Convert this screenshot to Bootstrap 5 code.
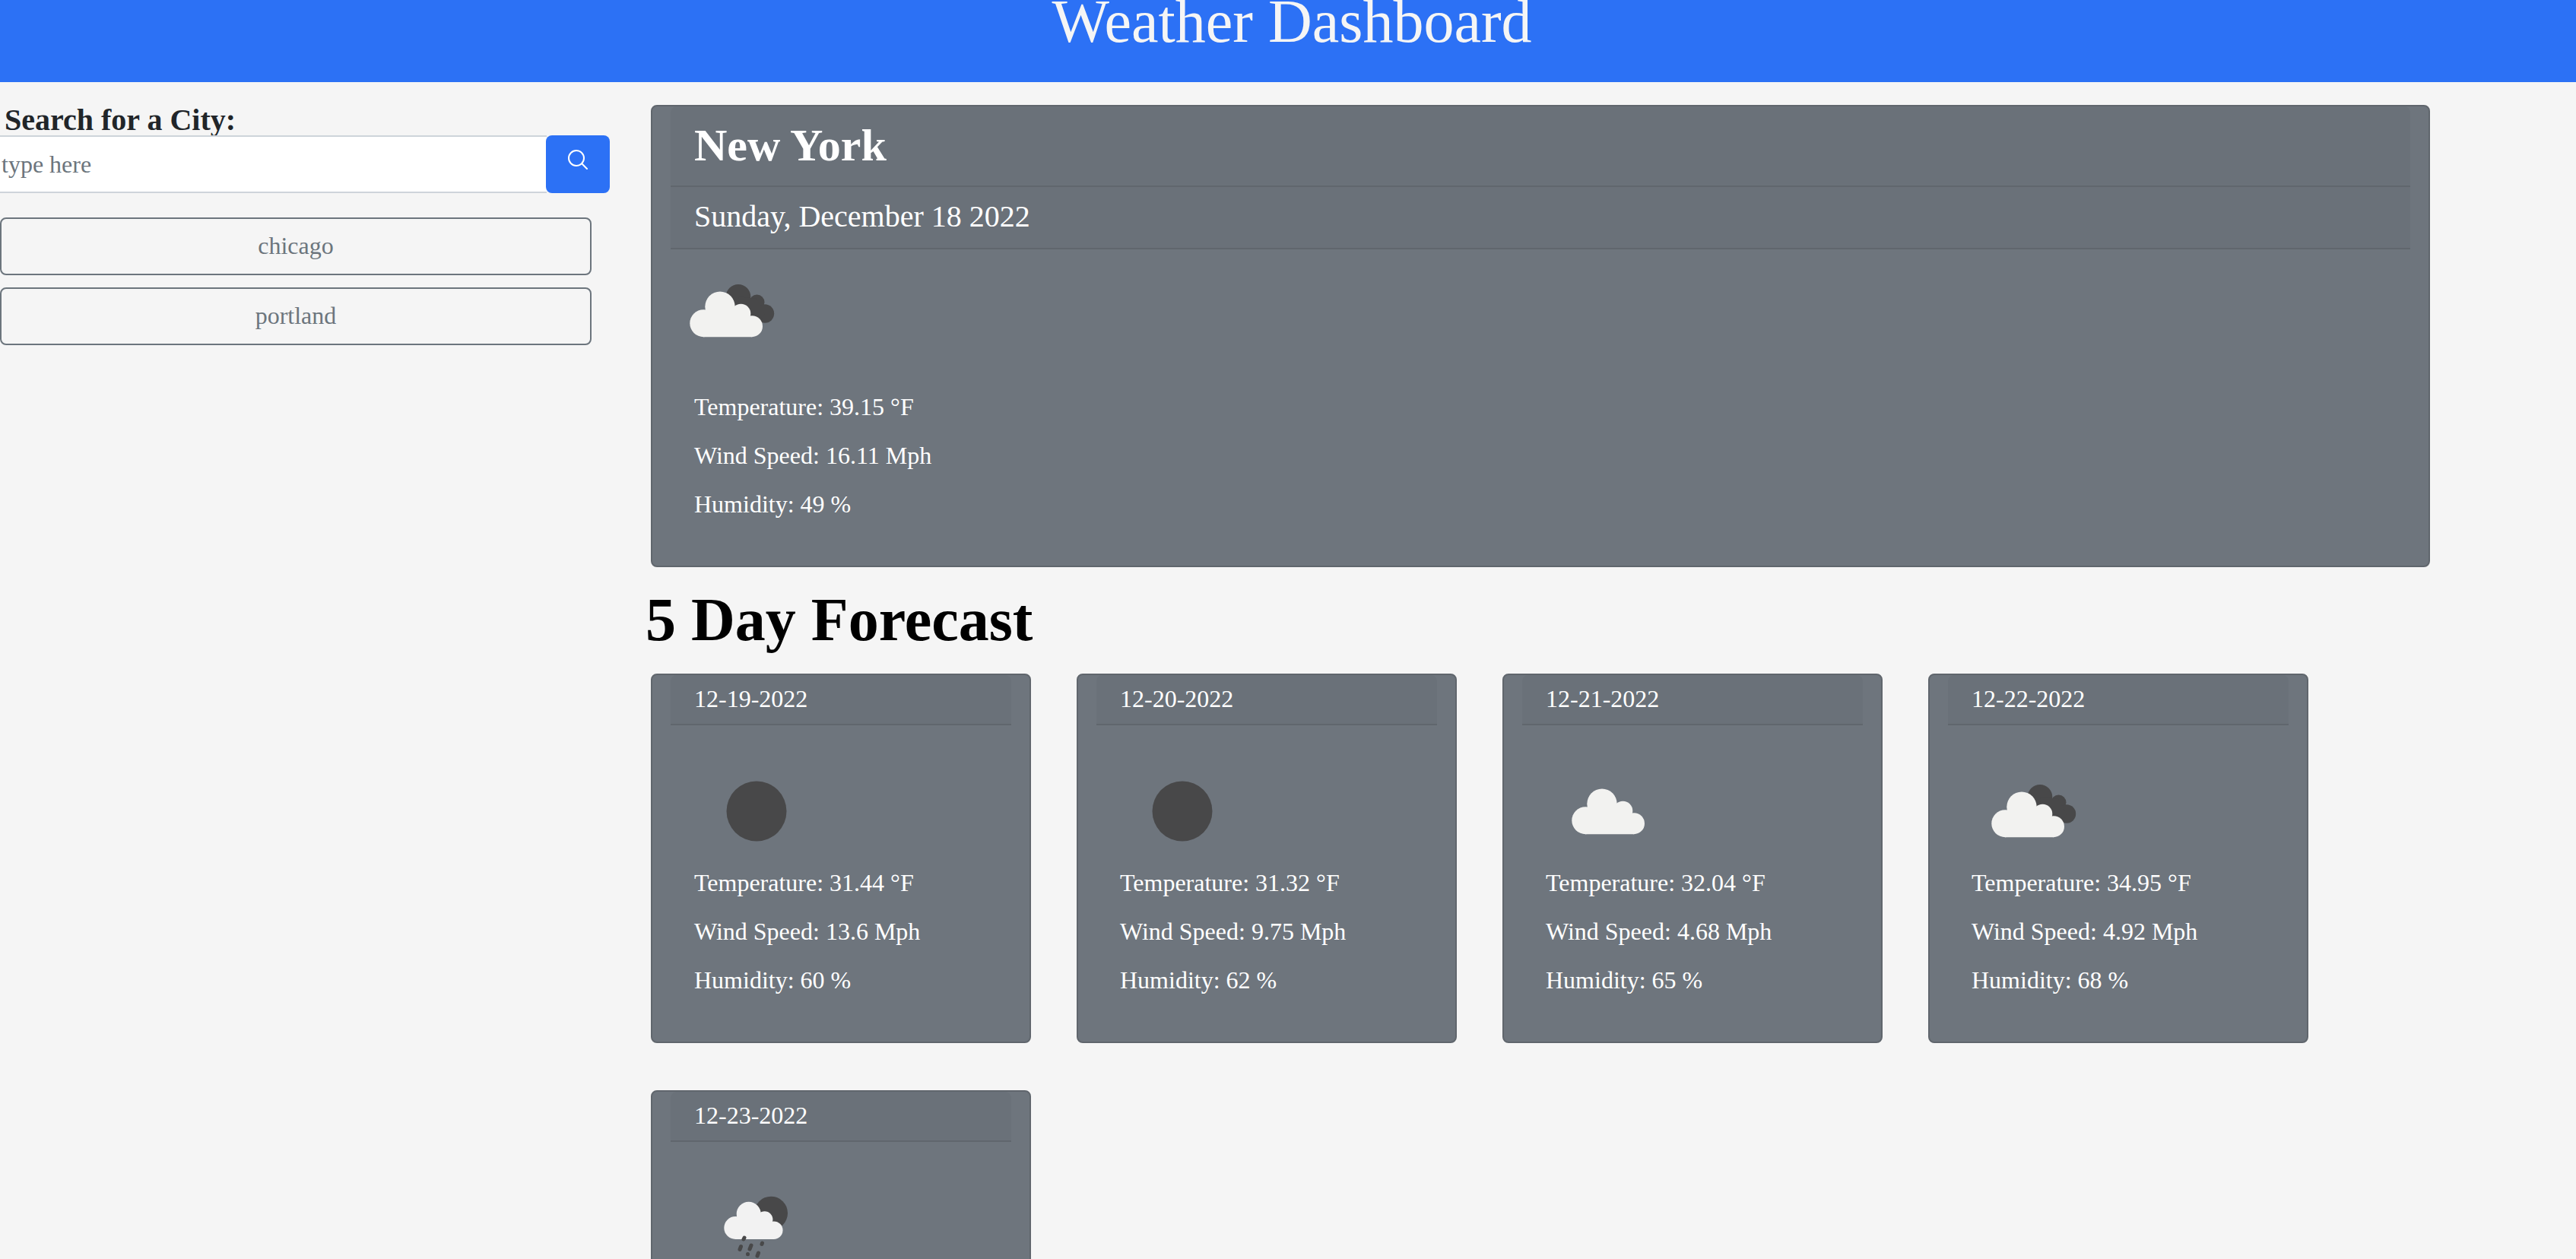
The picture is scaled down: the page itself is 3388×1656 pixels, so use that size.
<!DOCTYPE html>
<html lang="en">
<head>
<meta charset="utf-8">
<meta name="viewport" content="width=device-width, initial-scale=1">
<title>Weather Dashboard</title>
<link rel="stylesheet" href="https://cdn.jsdelivr.net/npm/bootstrap@5.3.0/dist/css/bootstrap.min.css">
<style>
  body { background: #f5f5f5; font-family: "Liberation Serif", "Times New Roman", serif; font-size: 32px; line-height: 48px; }
  .site-header { background: #2c71f5; color: #f5f5f5; padding: 0 0 52px 10px; }
  .site-header h1 { font-size: 80px; line-height: 56px; font-weight: 400; }
  .sidebar { padding-top: 30px; }
  .search-label { font-size: 40px; line-height: 40px; font-weight: 700; padding-left: 6px; }
  .search-group { padding-right: 45px; }
  .search-group .form-control { height: 76px; border: solid #ced4da; border-width: 2px 0; border-radius: 0; padding: 0 0 0 2px; font-size: 32px; color: #212529; }
  .search-group .form-control::placeholder { color: #6c757d; }
  .search-btn { width: 84px; height: 76px; padding: 0 0 12px; border: 0; background: #2c71f5; color: #fff; border-radius: 8px !important; }
  .history { padding: 32px 69px 0 0; gap: 16px; }
  .history .btn { height: 76px; font-size: 32px; line-height: 48px; padding: 0 0 2px; color: #6c757d; border: 2px solid #6c757d; border-radius: 8px; }
  .results { padding: 30px 192px 0 9px; }
  .weather-card { background: #6e757d; color: #fff; border: 2px solid #60666d; border-radius: 8px; padding: 0 24px 41px; }
  .weather-card .card-header { background: rgba(0,0,0,.03); border-bottom: 2px solid #60666d; padding: 7px 31px 9px; border-radius: 8px 8px 0 0; }
  .weather-card .card-header + .card-header { border-radius: 0; }
  .weather-card p { margin: 0 31px 16px; }
  .city-name { font-size: 60px; line-height: 88px; font-weight: 700; }
  .city-date { font-size: 40px; line-height: 64px; }
  .weather-icon { width: 160px; height: 120px; }
  .now-icon { margin: 21px 0 42px; }
  .day-icon { margin: 53px 32px 10px; }
  .forecast-title { font-size: 80px; line-height: 96px; font-weight: 700; color: #000; margin: 21px 0 23px -7px; }
  .forecast-list { gap: 62px 60px; }
  .day-card { width: 500px; }
</style>
<script src="https://cdn.jsdelivr.net/npm/bootstrap@5.3.0/dist/js/bootstrap.bundle.min.js"></script>
</head>
<body class="vh-100 overflow-hidden">
<svg class="d-none" xmlns="http://www.w3.org/2000/svg">
  <defs>
    <g id="cloud">
      <circle cx="43.300" cy="76.200" r="18"/>
      <circle cx="65" cy="54.300" r="19.700"/>
      <circle cx="92.500" cy="63.500" r="12.800"/>
      <circle cx="107" cy="80.200" r="14"/>
      <path d="M43 94.200V62L65 54L92 63L107 80V94.200Z"/>
    </g>
  </defs>
  <symbol id="moon" viewBox="0 0 160 120"><circle cx="81" cy="60" r="39.500" fill="#484849"/></symbol>
  <symbol id="clouds" viewBox="0 0 160 120">
    <g fill="#484849">
      <circle cx="89" cy="41.300" r="16.300"/>
      <circle cx="113.500" cy="48.500" r="10"/>
      <circle cx="124" cy="63.500" r="12.200"/>
      <path d="M89 41L113 44L124 64L118 74L90 70Z"/>
    </g>
    <use href="#cloud" fill="#f2f2f0"/>
  </symbol>
  <symbol id="cloudy" viewBox="0 0 160 120">
    <use href="#cloud" fill="#f2f2f0" transform="translate(8 -4)"/>
  </symbol>
  <symbol id="rain" viewBox="0 0 160 120">
    <circle cx="100" cy="40.700" r="22" fill="#484849"/>
    <g fill="#f2f2f2">
      <circle cx="53.300" cy="60" r="15"/>
      <circle cx="70.700" cy="41.700" r="16"/>
      <circle cx="91.700" cy="49" r="10.700"/>
      <circle cx="103.700" cy="63.200" r="11.800"/>
      <path d="M53 75V48L71 42L92 49L104 63V75Z"/>
    </g>
    <path fill="none" stroke="#484849" stroke-width="5" stroke-linecap="round" d="M65 73l-1 2M60.500 84.500l-1.500 4M74 83l-2 5M88.500 80l-.5 1.500M69.500 94.500v.2M83.500 93l-1.500 4"/>
  </symbol>
</svg>

<header class="site-header text-center"><h1 class="m-0">Weather Dashboard</h1></header>

<div class="row g-0">
  <aside class="col-3 sidebar">
    <form>
      <label class="search-label d-block" for="city">Search for a City:</label>
      <div class="input-group search-group">
        <input type="text" class="form-control" id="city" placeholder="type here">
        <button type="button" class="btn search-btn d-flex align-items-center justify-content-center" aria-label="Search">
          <svg width="32" height="32" viewBox="0 0 24 24" fill="none" stroke="currentColor" stroke-width="1.5" stroke-linecap="round"><path d="M21 21l-5.197-5.197m0 0A7.500 7.500 0 1 0 5.196 5.196a7.500 7.500 0 0 0 10.607 10.607z"/></svg>
        </button>
      </div>
    </form>
    <div class="history d-flex flex-column">
      <button type="button" class="btn">chicago</button>
      <button type="button" class="btn">portland</button>
    </div>
  </aside>

  <main class="col-9 results">
    <section class="card weather-card">
      <div class="card-header"><h2 class="city-name m-0">New York</h2></div>
      <div class="card-header"><h3 class="city-date fw-normal m-0">Sunday, December 18 2022</h3></div>
      <svg class="weather-icon now-icon"><use href="#clouds"/></svg>
      <p>Temperature: 39.15 °F</p>
      <p>Wind Speed: 16.11 Mph</p>
      <p>Humidity: 49 %</p>
    </section>

    <h2 class="forecast-title">5 Day Forecast</h2>
    <div class="forecast-list d-flex flex-wrap">
      <article class="card weather-card day-card">
        <div class="card-header">12-19-2022</div>
        <svg class="weather-icon day-icon"><use href="#moon"/></svg>
        <p>Temperature: 31.44 °F</p>
        <p>Wind Speed: 13.6 Mph</p>
        <p>Humidity: 60 %</p>
      </article>
      <article class="card weather-card day-card">
        <div class="card-header">12-20-2022</div>
        <svg class="weather-icon day-icon"><use href="#moon"/></svg>
        <p>Temperature: 31.32 °F</p>
        <p>Wind Speed: 9.75 Mph</p>
        <p>Humidity: 62 %</p>
      </article>
      <article class="card weather-card day-card">
        <div class="card-header">12-21-2022</div>
        <svg class="weather-icon day-icon"><use href="#cloudy"/></svg>
        <p>Temperature: 32.04 °F</p>
        <p>Wind Speed: 4.68 Mph</p>
        <p>Humidity: 65 %</p>
      </article>
      <article class="card weather-card day-card">
        <div class="card-header">12-22-2022</div>
        <svg class="weather-icon day-icon"><use href="#clouds"/></svg>
        <p>Temperature: 34.95 °F</p>
        <p>Wind Speed: 4.92 Mph</p>
        <p>Humidity: 68 %</p>
      </article>
      <article class="card weather-card day-card">
        <div class="card-header">12-23-2022</div>
        <svg class="weather-icon day-icon"><use href="#rain"/></svg>
      </article>
    </div>
  </main>
</div>
</body>
</html>
